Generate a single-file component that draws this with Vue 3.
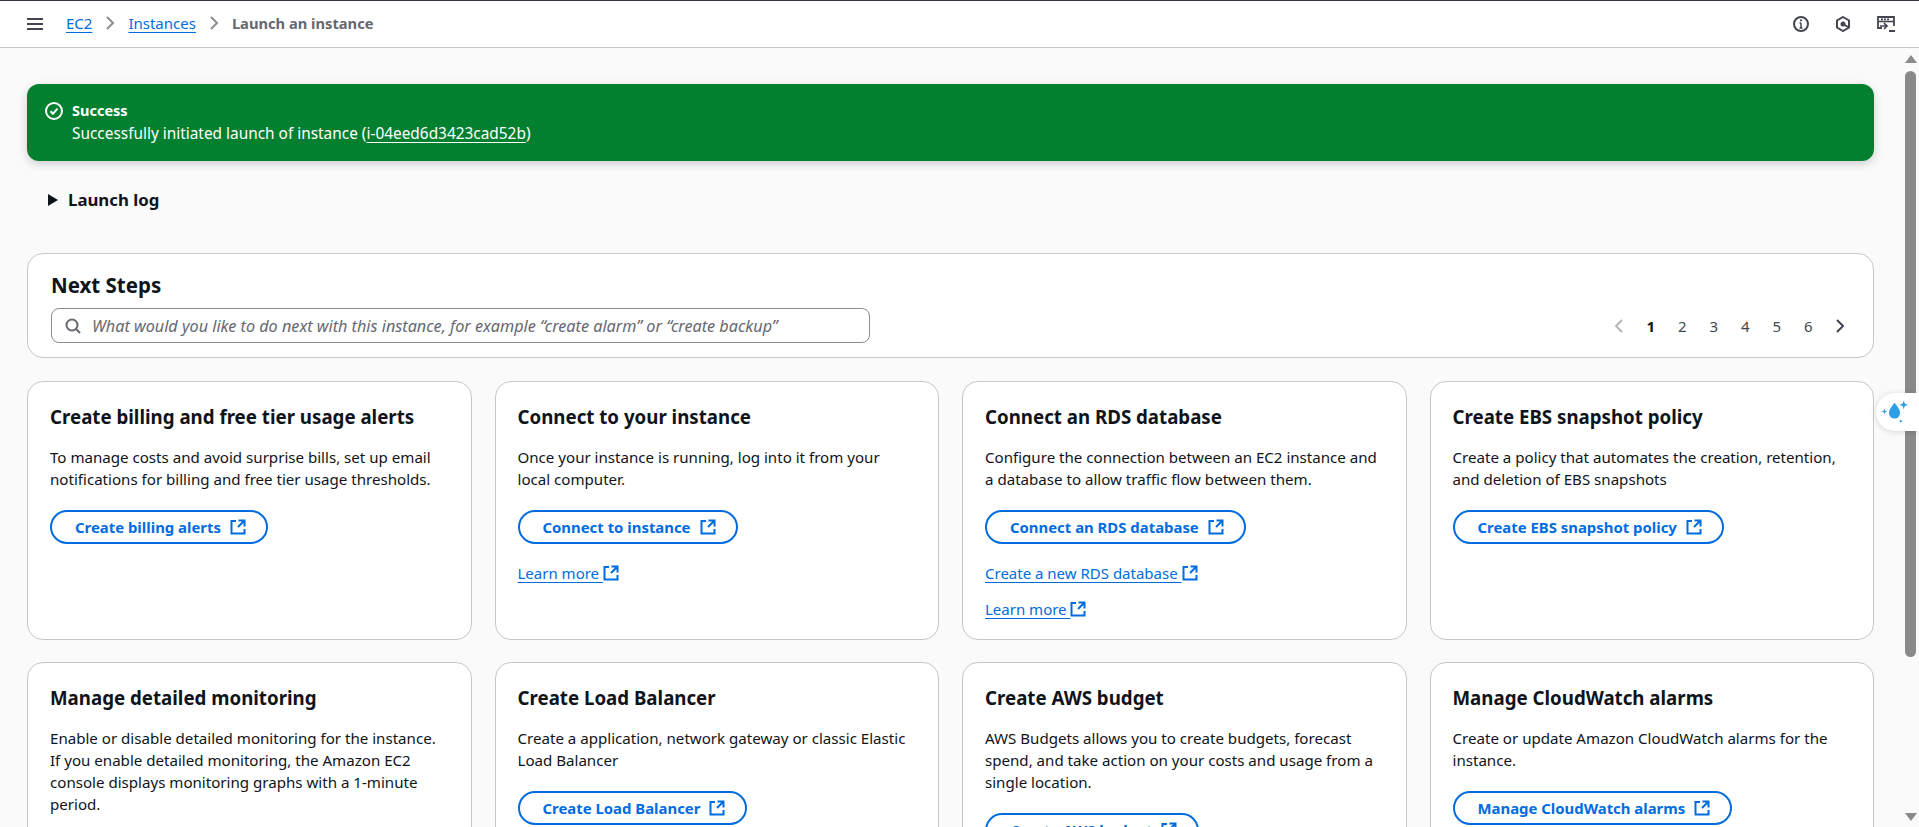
<script setup>
// EC2 launch confirmation page
const pages = [1, 2, 3, 4, 5, 6]

const cards = [
  {
    title: 'Create billing and free tier usage alerts',
    text: 'To manage costs and avoid surprise bills, set up email notifications for billing and free tier usage thresholds.',
    action: 'Create billing alerts',
    links: []
  },
  {
    title: 'Connect to your instance',
    text: 'Once your instance is running, log into it from your local computer.',
    action: 'Connect to instance',
    links: ['Learn more']
  },
  {
    title: 'Connect an RDS database',
    text: 'Configure the connection between an EC2 instance and a database to allow traffic flow between them.',
    action: 'Connect an RDS database',
    links: ['Create a new RDS database', 'Learn more']
  },
  {
    title: 'Create EBS snapshot policy',
    text: 'Create a policy that automates the creation, retention, and deletion of EBS snapshots',
    action: 'Create EBS snapshot policy',
    links: []
  },
  {
    title: 'Manage detailed monitoring',
    text: 'Enable or disable detailed monitoring for the instance. If you enable detailed monitoring, the Amazon EC2 console displays monitoring graphs with a 1-minute period.',
    action: 'Manage detailed monitoring',
    links: []
  },
  {
    title: 'Create Load Balancer',
    text: 'Create a application, network gateway or classic Elastic Load Balancer',
    action: 'Create Load Balancer',
    links: []
  },
  {
    title: 'Create AWS budget',
    text: 'AWS Budgets allows you to create budgets, forecast spend, and take action on your costs and usage from a single location.',
    action: 'Create AWS budget',
    links: []
  },
  {
    title: 'Manage CloudWatch alarms',
    text: 'Create or update Amazon CloudWatch alarms for the instance.',
    action: 'Manage CloudWatch alarms',
    links: []
  }
]
</script>

<template>
  <div class="app">
    <header class="topbar">
      <svg class="icon menu" viewBox="0 0 16 16"><path d="M0 3h16M0 8h16M0 13h16" /></svg>
      <nav class="crumbs">
        <a>EC2</a>
        <svg class="icon chevron" viewBox="0 0 16 16"><path d="M5 2l6 6-6 6" /></svg>
        <a>Instances</a>
        <svg class="icon chevron" viewBox="0 0 16 16"><path d="M5 2l6 6-6 6" /></svg>
        <span>Launch an instance</span>
      </nav>
      <div class="tools">
        <svg class="icon" viewBox="0 0 16 16">
          <circle cx="8" cy="8" r="7" />
          <path d="M8 7v5M6.500 12h3M6.500 7H8" stroke-width="1.500" />
          <path d="M8 3.500v1.700" />
        </svg>
        <svg class="icon" viewBox="0 0 16 16">
          <path d="M8 1l6 3.500v7L8 15l-6-3.500v-7z" />
          <path d="M8 8l5 3" />
          <circle cx="8" cy="8" r="2.500" class="solid" />
        </svg>
        <svg class="icon wide" viewBox="0 0 18 16">
          <path d="M5 12H1V1h16v9" stroke-width="1.800" />
          <path d="M1 5.500h16" stroke-width="1.600" />
          <path d="M4 3.300h8" stroke-width="1.800" class="dots" />
          <path d="M3 10h6.500M7 7l3 3-3 3" stroke-width="1.700" />
          <path d="M12 15h6" stroke-width="2" />
        </svg>
      </div>
    </header>

    <div class="body">
      <main class="content">
        <section class="banner">
          <svg class="icon status" viewBox="0 0 18 18">
            <circle cx="9" cy="9" r="8" />
            <path d="M5.500 9.200l2.500 2.500 4.500-5" />
          </svg>
          <div>
            <div class="banner-title">Success</div>
            <div>Successfully initiated launch of instance (<a>i-04eed6d3423cad52b</a>)</div>
          </div>
        </section>

        <div class="log">
          <svg class="caret" viewBox="0 0 10 12"><path d="M0 0l10 6-10 6z" /></svg>
          <span>Launch log</span>
        </div>

        <section class="panel">
          <h1>Next Steps</h1>
          <div class="panel-row">
            <div class="search">
              <svg class="icon search-icon" viewBox="0 0 16 16">
                <circle cx="7" cy="7" r="5.500" />
                <path d="M15 15l-4.500-4.500" />
              </svg>
              <span>What would you like to do next with this instance, for example “create alarm” or “create backup”</span>
            </div>
            <div class="pager">
              <svg class="icon page-arrow off" viewBox="0 0 16 16"><path d="M11 2L5 8l6 6" /></svg>
              <span v-for="p in pages" :key="p" class="page" :class="{ current: p === 1 }">{{ p }}</span>
              <svg class="icon page-arrow" viewBox="0 0 16 16"><path d="M5 2l6 6-6 6" /></svg>
            </div>
          </div>
        </section>

        <section class="grid">
          <article v-for="card in cards" :key="card.title" class="card">
            <h2>{{ card.title }}</h2>
            <p>{{ card.text }}</p>
            <button class="action">
              {{ card.action }}
              <svg class="icon ext" viewBox="0 0 16 16">
                <path d="M14.500 7.500V1.500H8.500M14 2L8 8" />
                <path d="M6 2H1.500v12.500h13V10" />
              </svg>
            </button>
            <a v-for="link in card.links" :key="link" class="more">
              <span>{{ link }}&nbsp;</span>
              <svg class="icon ext" viewBox="0 0 16 16">
                <path d="M14.500 7.500V1.500H8.500M14 2L8 8" />
                <path d="M6 2H1.500v12.500h13V10" />
              </svg>
            </a>
          </article>
        </section>
      </main>

      <div class="scrollbar">
        <i class="arrow up"></i>
        <i class="thumb"></i>
        <i class="arrow down"></i>
      </div>

      <div class="assist">
        <svg viewBox="0 0 30 28">
          <path d="M14 4c3.200 4.200 5.800 7.200 5.800 10.500a5.800 5.800 0 0 1-11.600 0C8.200 11.200 10.800 8.200 14 4z" />
          <path d="M23.500 1.500l1.200 3.300L28 6l-3.300 1.200-1.200 3.300-1.200-3.300L19 6l3.300-1.200z" />
          <path d="M3.500 10l.8 2.200 2.200.8-2.200.8-.8 2.200-.8-2.200-2.200-.8 2.200-.8z" />
          <path d="M20.500 21l.6 1.400 1.400.6-1.400.6-.6 1.400-.6-1.400-1.400-.6 1.400-.6z" />
        </svg>
      </div>
    </div>
  </div>
</template>

<style>
html,
body {
  margin: 0;
  overflow: hidden;
}
</style>

<style scoped>
.app {
  height: 827px;
  display: flex;
  flex-direction: column;
  overflow: hidden;
  background: #fafafa;
  color: #0f141a;
  font-family: "Noto Sans", sans-serif;
  font-size: 14px;
  line-height: 22px;
}

.icon {
  display: block;
  flex: none;
  width: 16px;
  height: 16px;
  fill: none;
  stroke: currentColor;
  stroke-width: 2;
}

.topbar {
  flex: none;
  box-sizing: border-box;
  height: 48px;
  display: flex;
  align-items: center;
  padding: 0 24px 0 27px;
  background: #fff;
  border-top: 1px solid #333843;
  border-bottom: 1px solid #c6c6cd;
  color: #424650;
}

.crumbs {
  display: flex;
  align-items: center;
  margin: 0 0 2px 23px;
  font-size: 15px;
}

.crumbs a {
  color: #006ce0;
  text-decoration: underline;
  text-underline-offset: 3px;
}

.crumbs span {
  color: #656871;
  font-size: 14.700px;
  font-weight: 700;
}

.chevron {
  margin: 0 10px;
  color: #8c8c94;
}

.tools {
  margin-left: auto;
  display: flex;
  align-items: center;
  gap: 26px;
}

.wide {
  width: 18px;
}

.solid {
  fill: currentColor;
  stroke: none;
}

.dots {
  stroke-dasharray: 2 1;
}

.body {
  flex: 1;
  min-height: 0;
  display: flex;
  position: relative;
}

.content {
  flex: 1;
  min-width: 0;
  padding: 36px 28px 0 27px;
}

.banner {
  display: flex;
  gap: 9px;
  padding: 15px 16px 16px 18px;
  border-radius: 12px;
  background: #037f30;
  color: #fff;
  font-size: 15.400px;
  box-shadow: 0 3px 10px rgba(0, 7, 22, 0.18);
}

.banner a {
  text-decoration: underline;
  text-underline-offset: 3px;
}

.banner-title {
  margin-bottom: 2px;
  font-size: 14.500px;
  font-weight: 700;
}

.status {
  width: 18px;
  height: 18px;
  margin-top: 3px;
}

.log {
  display: flex;
  align-items: center;
  gap: 10px;
  margin: 27px 0 0 21px;
  font-size: 16.800px;
  line-height: 24px;
  font-weight: 700;
}

.caret {
  width: 10px;
  height: 12px;
  fill: #0f141a;
}

.panel {
  margin-top: 41px;
  padding: 17px 23px 14px;
  background: #fff;
  border: 1px solid #c6c6cd;
  border-radius: 16px;
}

h1 {
  margin: 0 0 9px;
  font-size: 20.500px;
  line-height: 28px;
  font-weight: 700;
}

.panel-row {
  display: flex;
  align-items: center;
  justify-content: space-between;
}

.search {
  box-sizing: border-box;
  width: 819px;
  height: 35px;
  display: flex;
  align-items: center;
  gap: 11px;
  padding: 0 13px;
  border: 1px solid #8c8c94;
  border-radius: 8px;
  color: #656871;
  font-size: 16.200px;
  font-style: italic;
}

.search-icon {
  color: #656871;
}

.pager {
  display: flex;
  align-items: center;
  margin-right: 2px;
  color: #424650;
  font-size: 15px;
}

.page {
  width: 31.500px;
  text-align: center;
}

.page.current {
  color: #0f141a;
  font-weight: 700;
}

.page-arrow.off {
  color: #b4b4bb;
  margin-right: 8px;
}

.page-arrow {
  margin-left: 8px;
}

.grid {
  margin-top: 23px;
  display: grid;
  grid-template-columns: repeat(4, 1fr);
  gap: 22px 23px;
}

.card {
  min-width: 0;
  display: flex;
  flex-direction: column;
  align-items: flex-start;
  padding: 23px 22px 19px;
  background: #fff;
  border: 1px solid #c6c6cd;
  border-radius: 16px;
}

h2 {
  margin: 0 0 17px;
  font-size: 18.700px;
  line-height: 24px;
  font-weight: 700;
}

p {
  margin: 0 0 20px;
  font-size: 15.100px;
}

.action {
  display: flex;
  align-items: center;
  gap: 9px;
  height: 34px;
  padding: 0 20px 0 23px;
  background: #fff;
  border: 2px solid #006ce0;
  border-radius: 20px;
  color: #006ce0;
  font-family: inherit;
  font-size: 14.900px;
  font-weight: 700;
}

.more {
  display: flex;
  align-items: center;
  margin-top: 18px;
  color: #006ce0;
  font-size: 15px;
}

.more + .more {
  margin-top: 14px;
}

.more span {
  text-decoration: underline;
  text-underline-offset: 3px;
}

.scrollbar {
  flex: none;
  width: 17px;
  display: flex;
  flex-direction: column;
  align-items: center;
  background: #fafafa;
}

.arrow {
  width: 0;
  height: 0;
  border-left: 6px solid transparent;
  border-right: 6px solid transparent;
}

.arrow.up {
  margin-top: 7px;
  border-bottom: 8px solid #8a8a8a;
}

.arrow.down {
  margin-top: auto;
  margin-bottom: 6px;
  border-top: 8px solid #8a8a8a;
}

.thumb {
  width: 11px;
  height: 586px;
  margin-top: 8px;
  border-radius: 6px;
  background: #8a8a8a;
}

.assist {
  position: absolute;
  top: 345px;
  right: 0;
  width: 43px;
  height: 38px;
  display: flex;
  align-items: center;
  padding-left: 5px;
  box-sizing: border-box;
  background: #fff;
  border-radius: 19px 0 0 19px;
  box-shadow: 0 1px 6px rgba(0, 7, 22, 0.15);
}

.assist svg {
  width: 29px;
  height: 27px;
  fill: #2c9fe8;
}
</style>
